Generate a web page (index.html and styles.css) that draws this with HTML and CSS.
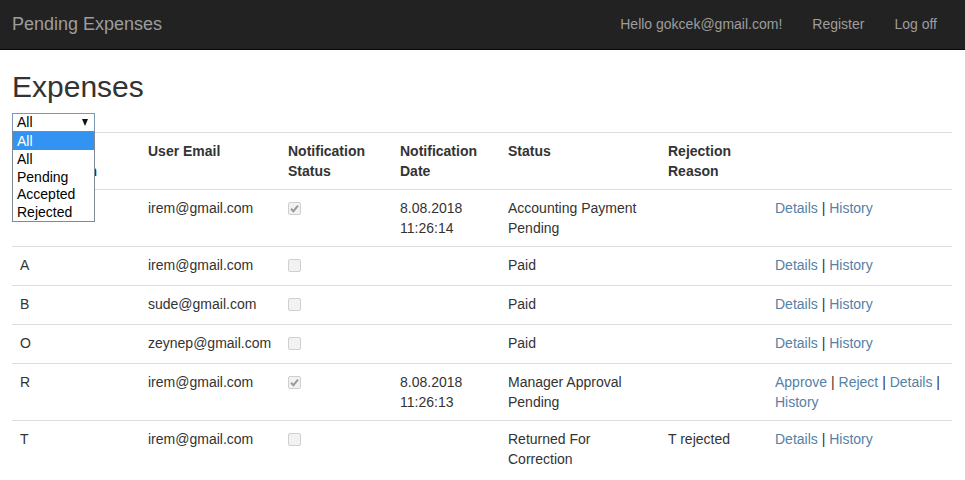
FILE: index.html
```html
<!DOCTYPE html>
<html>
<head>
<meta charset="utf-8">
<title>Expenses</title>
<link rel="stylesheet" href="styles.css">
</head>
<body>
<nav class="navbar">
  <div class="container nav-inner">
    <a class="brand" href="#">Pending Expenses</a>
    <ul class="nav-right">
      <li><a href="#">Hello gokcek@gmail.com!</a></li>
      <li><a href="#">Register</a></li>
      <li><a href="#">Log off</a></li>
    </ul>
  </div>
</nav>
<main class="container body-content">
  <h2 class="title">Expenses</h2>
  <div class="filter">
    <div class="select"><span>All</span><span class="arrow"></span></div>
    <ul class="listbox">
      <li class="opt selected">All</li>
      <li class="opt">All</li>
      <li class="opt">Pending</li>
      <li class="opt">Accepted</li>
      <li class="opt">Rejected</li>
    </ul>
  </div>
  <table class="table">
    <colgroup>
      <col class="c1"><col class="c2"><col class="c3"><col class="c4"><col class="c5"><col class="c6"><col class="c7">
    </colgroup>
    <tbody>
      <tr>
        <th>Expense Description</th>
        <th>User Email</th>
        <th>Notification Status</th>
        <th>Notification Date</th>
        <th>Status</th>
        <th>Rejection Reason</th>
        <th></th>
      </tr>
      <tr>
        <td>C</td>
        <td>irem@gmail.com</td>
        <td><span class="cb checked"><svg viewBox="0 0 13 13" width="13" height="13"><path d="M3 6.8 L5.4 9.2 L10 3.6" fill="none" stroke="#9a9a9a" stroke-width="2"/></svg></span></td>
        <td>8.08.2018 11:26:14</td>
        <td>Accounting Payment Pending</td>
        <td></td>
        <td><a href="#">Details</a> | <a href="#">History</a></td>
      </tr>
      <tr>
        <td>A</td>
        <td>irem@gmail.com</td>
        <td><span class="cb"></span></td>
        <td></td>
        <td>Paid</td>
        <td></td>
        <td><a href="#">Details</a> | <a href="#">History</a></td>
      </tr>
      <tr>
        <td>B</td>
        <td>sude@gmail.com</td>
        <td><span class="cb"></span></td>
        <td></td>
        <td>Paid</td>
        <td></td>
        <td><a href="#">Details</a> | <a href="#">History</a></td>
      </tr>
      <tr>
        <td>O</td>
        <td>zeynep@gmail.com</td>
        <td><span class="cb"></span></td>
        <td></td>
        <td>Paid</td>
        <td></td>
        <td><a href="#">Details</a> | <a href="#">History</a></td>
      </tr>
      <tr>
        <td>R</td>
        <td>irem@gmail.com</td>
        <td><span class="cb checked"><svg viewBox="0 0 13 13" width="13" height="13"><path d="M3 6.8 L5.4 9.2 L10 3.6" fill="none" stroke="#9a9a9a" stroke-width="2"/></svg></span></td>
        <td>8.08.2018 11:26:13</td>
        <td>Manager Approval Pending</td>
        <td></td>
        <td><a href="#">Approve</a> | <a href="#">Reject</a> | <a href="#">Details</a> | <a href="#">History</a></td>
      </tr>
      <tr>
        <td>T</td>
        <td>irem@gmail.com</td>
        <td><span class="cb"></span></td>
        <td></td>
        <td>Returned For Correction</td>
        <td>T rejected</td>
        <td><a href="#">Details</a> | <a href="#">History</a></td>
      </tr>
    </tbody>
  </table>
</main>
</body>
</html>
```
FILE: styles.css
```css
* { box-sizing: border-box; }
html, body { margin: 0; padding: 0; }
body {
  font-family: "Liberation Sans", Arial, Helvetica, sans-serif;
  font-size: 14px;
  line-height: 20px;
  color: #333;
  background: #fff;
}
a { color: #5581a6; text-decoration: none; }
ul { list-style: none; margin: 0; padding: 0; }

.container {
  width: 940px;
  margin-left: 12px;
}

.navbar {
  height: 50px;
  background: #222;
  border-bottom: 1px solid #080808;
}
.nav-inner {
  display: flex;
  justify-content: space-between;
  align-items: flex-start;
}
.brand {
  display: block;
  padding: 14px 0;
  font-size: 18px;
  line-height: 20px;
  color: #9d9d9d;
}
.nav-right {
  display: flex;
}
.nav-right a {
  display: block;
  padding: 14px 15px;
  line-height: 20px;
  color: #9d9d9d;
}

.title {
  margin: 20px 0 10px;
  font-size: 30px;
  font-weight: 500;
  line-height: 33px;
  color: #333;
}

.filter {
  position: relative;
  width: 83px;
}
.select {
  height: 19px;
  border: 1px solid #7b97b8;
  background: #fff;
  display: flex;
  justify-content: space-between;
  align-items: center;
  padding: 0 6px 0 4px;
  font-size: 14px;
  line-height: 17px;
  color: #000;
}
.arrow {
  width: 0;
  height: 0;
  border-left: 3.5px solid transparent;
  border-right: 3.5px solid transparent;
  border-top: 7px solid #111;
}
.listbox {
  position: absolute;
  top: 18px;
  left: 0;
  width: 83px;
  background: #fff;
  border: 1px solid #7f8a96;
  z-index: 5;
}
.opt {
  height: 17.8px;
  line-height: 18px;
  padding-left: 4px;
  color: #000;
}
.opt.selected {
  background: #3393f3;
  color: #fff;
}

.table {
  width: 940px;
  border-collapse: collapse;
  border-spacing: 0;
  table-layout: fixed;
  margin-bottom: 20px;
}
.c1 { width: 128px; }
.c2 { width: 140px; }
.c3 { width: 112px; }
.c4 { width: 108px; }
.c5 { width: 160px; }
.c6 { width: 107px; }
.c7 { width: 185px; }
.table th, .table td {
  padding: 8px;
  border-top: 1px solid #ddd;
  vertical-align: top;
  text-align: left;
  line-height: 20px;
}
.table th { font-weight: bold; }

.cb {
  display: block;
  width: 13px;
  height: 13px;
  margin: 4px 0 5px;
  border: 1px solid #cfcfcf;
  border-radius: 2px;
  background: #f2f2f2;
  position: relative;
}
.cb svg {
  position: absolute;
  left: -1px;
  top: -1px;
}
```
